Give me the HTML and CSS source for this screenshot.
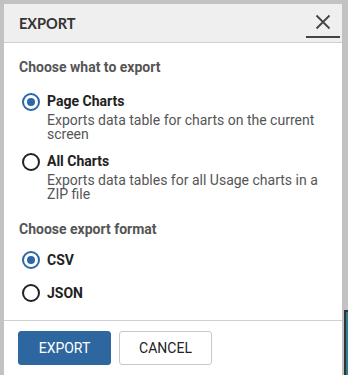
FILE: index.html
```html
<!DOCTYPE html>
<html>
<head>
<meta charset="utf-8">
<link rel="stylesheet" href="styles.css">
</head>
<body>
<div class="backdrop">
  <div class="dialog">
    <div class="header">
      <span class="title">EXPORT</span>
      <button class="close" aria-label="Close">
        <svg width="16" height="16" viewBox="0 0 16 16"><path d="M1.5 1.5 L14.5 14.5 M14.5 1.5 L1.5 14.5" stroke="#444" stroke-width="1.8" fill="none"/></svg>
      </button>
    </div>
    <div class="body">
      <div class="section-title">Choose what to export</div>
      <div class="option">
        <span class="radio checked"></span>
        <div class="option-text">
          <div class="label">Page Charts</div>
          <div class="desc">Exports data table for charts on the current screen</div>
        </div>
      </div>
      <div class="option">
        <span class="radio"></span>
        <div class="option-text">
          <div class="label">All Charts</div>
          <div class="desc">Exports data tables for all Usage charts in a ZIP file</div>
        </div>
      </div>
      <div class="section-title second">Choose export format</div>
      <div class="option simple">
        <span class="radio checked"></span>
        <div class="label">CSV</div>
      </div>
      <div class="option simple">
        <span class="radio"></span>
        <div class="label">JSON</div>
      </div>
    </div>
    <div class="footer">
      <button class="btn primary">EXPORT</button>
      <button class="btn secondary">CANCEL</button>
    </div>
  </div>
  <div class="edge"></div>
</div>
</body>
</html>
```
FILE: styles.css
```css
html, body {
  margin: 0;
  padding: 0;
  height: 100%;
  overflow: hidden;
}
body {
  background: #c2c2c2;
  font-family: Roboto, "Liberation Sans", sans-serif;
}
.backdrop {
  display: flex;
  padding: 4px 0 0 4px;
  gap: 2px;
}
.dialog {
  width: 338px;
  background: #fff;
  height: 380px;
  flex: none;
}
.header {
  height: 38px;
  background: #efefef;
  border-bottom: 1px solid #cfcfcf;
  display: flex;
  align-items: center;
  justify-content: space-between;
  padding: 0 0 0 15px;
}
.title {
  font-family: Lato, "Liberation Sans", sans-serif;
  font-weight: 700;
  font-size: 14.5px;
  color: #333;
}
.close {
  width: 34px;
  height: 30px;
  margin-right: 2px;
  border: none;
  border-bottom: 2px solid #444;
  background: transparent;
  padding: 6px 0 0 0;
  display: flex;
  justify-content: center;
  align-items: flex-start;
}
.body {
  padding: 16px 15px 0 15px;
  height: 278px;
  border-bottom: 1px solid #d0d0d0;
  box-sizing: border-box;
}
.section-title {
  font-size: 14px;
  font-weight: 700;
  color: #555;
  line-height: 17px;
  margin-bottom: 16px;
}
.section-title.second {
  margin-top: 20px;
  margin-bottom: 12px;
}
.option {
  display: flex;
  gap: 4px;
  margin-bottom: 11px;
}
.option.simple {
  align-items: center;
  margin-bottom: 14px;
}
.radio {
  width: 14px;
  height: 14px;
  border: 2px solid #222;
  border-radius: 50%;
  box-sizing: content-box;
  flex: none;
  margin: 1px 3px 0 3px;
  position: relative;
  background: #fff;
}
.radio.checked {
  border-color: #2c67a8;
}
.radio.checked::after {
  content: "";
  position: absolute;
  left: 3px;
  top: 3px;
  width: 8px;
  height: 8px;
  border-radius: 50%;
  background: #2c67a8;
}
.label {
  font-size: 14px;
  font-weight: 700;
  color: #222;
  line-height: 18px;
}
.desc {
  font-size: 14px;
  color: #555;
  line-height: 14px;
  margin-top: 3px;
}
.footer {
  display: flex;
  gap: 8px;
  padding: 10px 14px;
}
.btn {
  height: 34px;
  width: 93px;
  font-family: Roboto, "Liberation Sans", sans-serif;
  font-size: 14px;
  border-radius: 3px;
  padding: 0;
}
.btn.primary {
  background: #2e66a0;
  color: #fff;
  border: 1px solid #2e66a0;
}
.btn.secondary {
  background: #fff;
  color: #222;
  border: 1px solid #c8c8c8;
}
.edge {
  margin-top: 306px;
  width: 6px;
  height: 80px;
  background: #2e7f94;
  border-left: 2px solid #333;
  border-top: 2px solid #333;
  box-sizing: border-box;
}
```
